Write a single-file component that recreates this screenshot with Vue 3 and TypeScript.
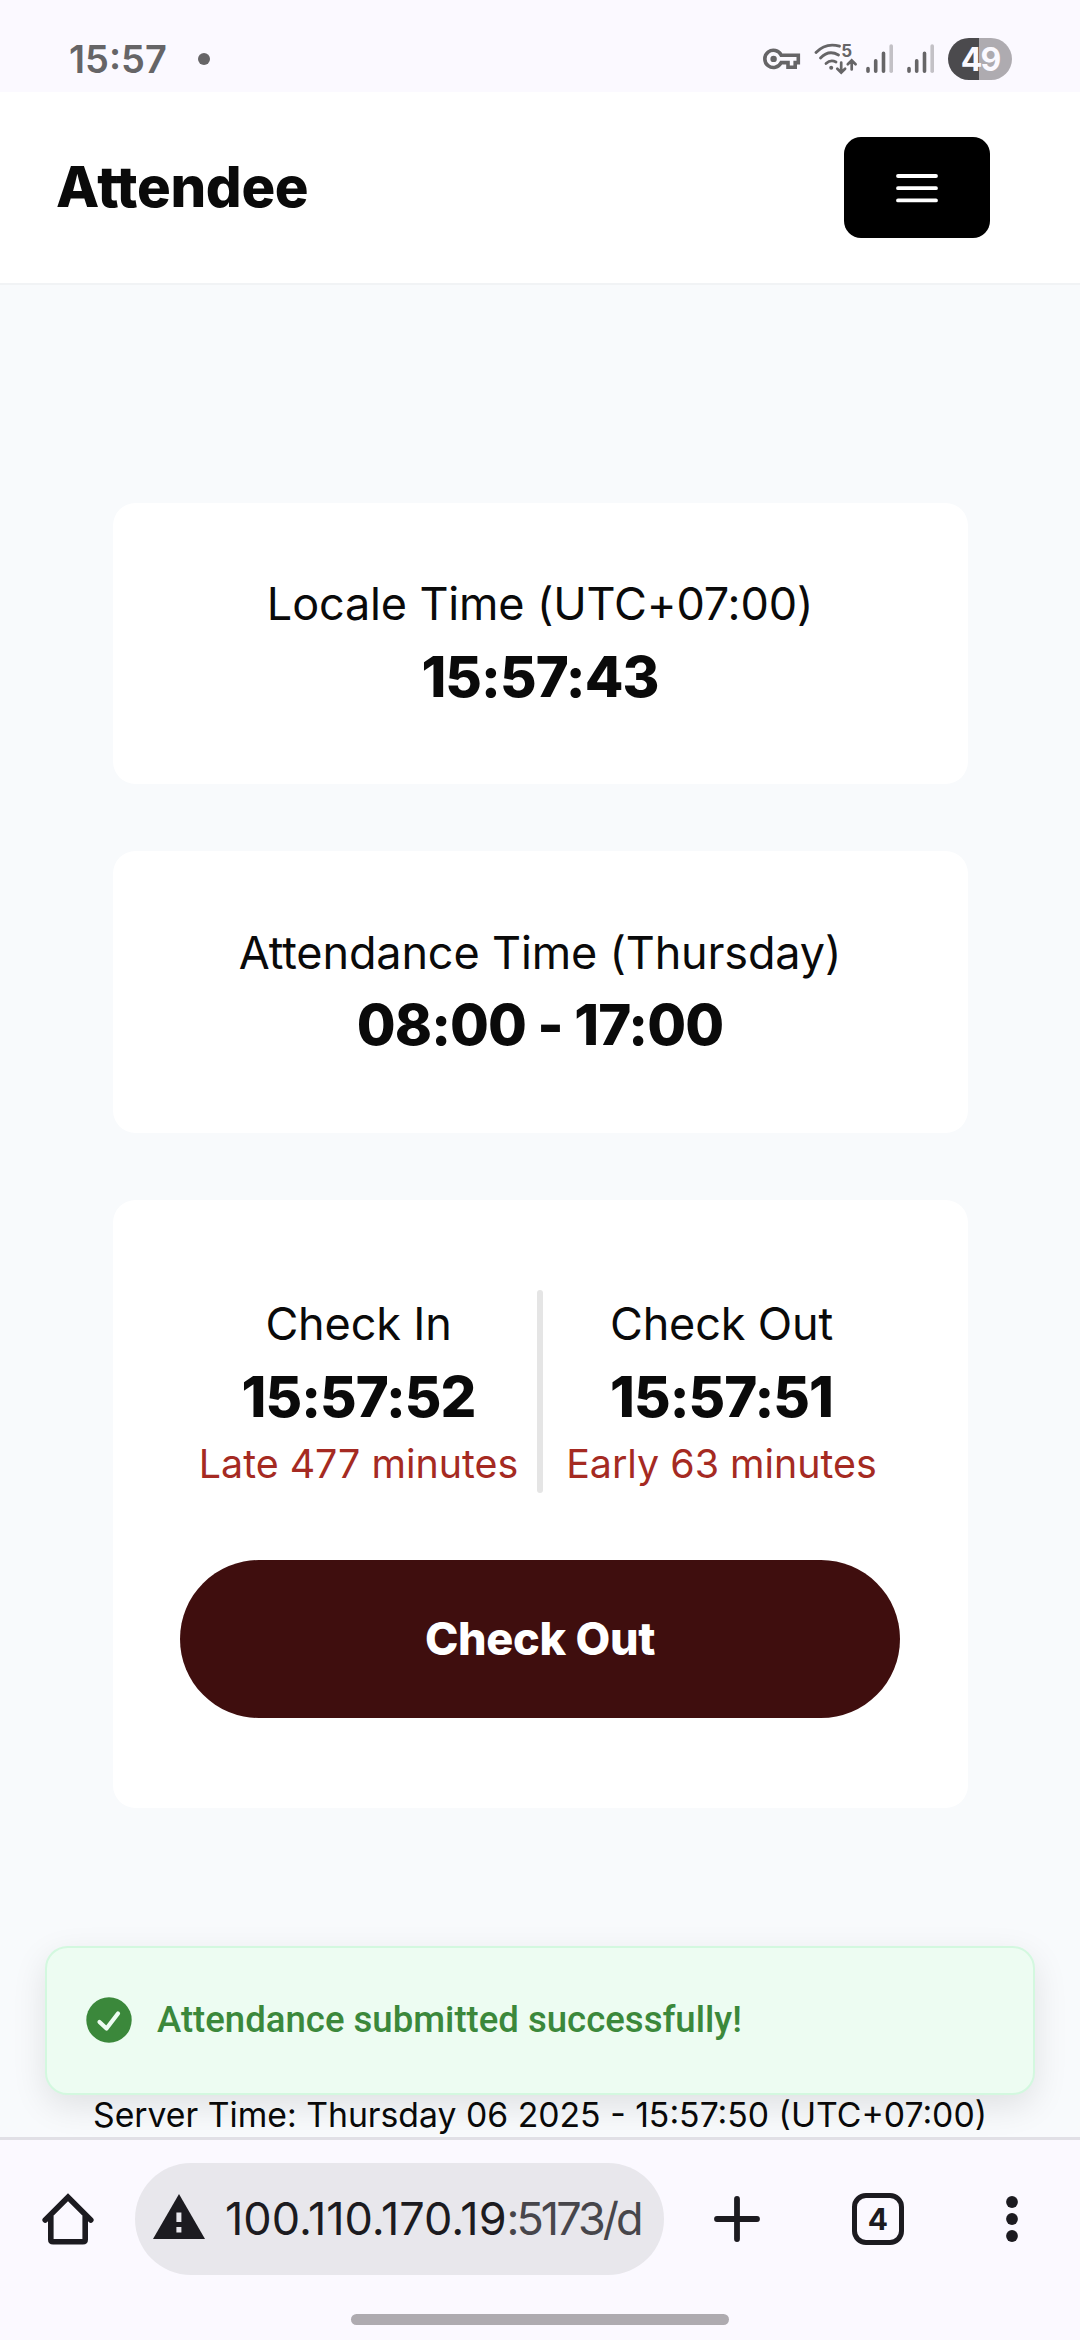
<script setup lang="ts">
interface TimeCard {
  label: string
  value: string
}

interface Attendance {
  label: string
  time: string
  note: string
}

const cards: TimeCard[] = [
  { label: 'Locale Time (UTC+07:00)', value: '15:57:43' },
  { label: 'Attendance Time (Thursday)', value: '08:00 - 17:00' },
]

const checkIn: Attendance = { label: 'Check In', time: '15:57:52', note: 'Late 477 minutes' }
const checkOut: Attendance = { label: 'Check Out', time: '15:57:51', note: 'Early 63 minutes' }
</script>

<template>
  <div class="screen">
    <div class="status">
      <span class="clock">15:57</span>
      <span class="dot"></span>
      <div class="indicators">
        <svg class="key" width="38" height="22" viewBox="0 0 38 22" fill="none" stroke="#666567">
          <path d="M18.2 7.2H35.3V14.6H32.2V19.2H25V14.6H18.2A8.6 8.6 0 1 1 18.2 7.2Z" stroke-width="3.600" />
          <circle cx="10.6" cy="10.9" r="3.2" fill="#666567" stroke="none" />
        </svg>
        <svg class="wifi" width="44" height="32" viewBox="0 0 44 32" fill="none" stroke="#666567" stroke-width="2.800" stroke-linecap="round">
          <path d="M2 9.500C9 2.200 18 1 25.500 3.200" />
          <path d="M6.500 15C12 9.200 18.500 8.600 24.500 12" />
          <path d="M12 20.500C15.500 17.200 18.500 17.200 22 19" />
          <circle cx="17.200" cy="24.700" r="2" fill="#666567" stroke="none" />
          <path d="M27.200 19.500V29M23.300 25.700L27.200 29.500L31.100 25.700M37.700 26.500V18M33.800 21.200L37.700 17.300L41.600 21.200" stroke-width="2.700" />
          <text x="27.300" y="14.300" class="wifi-gen">5</text>
        </svg>
        <svg v-for="n in 2" :key="n" class="signal" width="28" height="30" viewBox="0 0 28 30" stroke="#666567" stroke-width="3.600" stroke-linecap="round">
          <path d="M2 24.500V27.200M9.700 16.800V27.200M17.500 9.300V27.200" />
          <path d="M25.200 2V27.200" stroke="#c3c1c6" />
        </svg>
        <div class="battery"><span>49</span></div>
      </div>
    </div>

    <header class="navbar">
      <h1 class="brand">Attendee</h1>
      <button class="menu" type="button" aria-label="Menu">
        <svg width="50" height="50" viewBox="0 0 50 50" stroke="#fff" stroke-width="3.800" stroke-linecap="round">
          <path d="M6 13H44M6 25.200H44M6 37.400H44" />
        </svg>
      </button>
    </header>

    <main class="page">
      <section v-for="card in cards" :key="card.label" class="card">
        <p class="label">{{ card.label }}</p>
        <p class="value">{{ card.value }}</p>
      </section>
      <section class="card attendance">
        <div class="times">
          <div class="column">
            <p class="label">{{ checkIn.label }}</p>
            <p class="value">{{ checkIn.time }}</p>
            <p class="note">{{ checkIn.note }}</p>
          </div>
          <div class="divider"></div>
          <div class="column">
            <p class="label">{{ checkOut.label }}</p>
            <p class="value">{{ checkOut.time }}</p>
            <p class="note">{{ checkOut.note }}</p>
          </div>
        </div>
        <button class="submit" type="button">Check Out</button>
      </section>
      <p class="server">Server Time: Thursday 06 2025 - 15:57:50 (UTC+07:00)</p>

      <div class="toast">
        <svg width="46" height="46" viewBox="0 0 46 46">
          <circle cx="23" cy="23" r="22.700" fill="#3b883b" />
          <path d="M13.500 25L20.500 31.500L32 16.500" fill="none" stroke="#edfcf2" stroke-width="4.200" stroke-linecap="round" stroke-linejoin="round" />
        </svg>
        <span>Attendance submitted successfully!</span>
      </div>
    </main>

    <footer class="browser">
      <div class="toolbar">
        <svg class="home" width="52" height="52" viewBox="0 0 52 52" fill="none" stroke="#1c1b20" stroke-width="5.600" stroke-linecap="round">
          <path d="M3.200 27L26 4.200L48.800 27" stroke-linejoin="miter" />
          <path d="M8.800 23V46.500Q8.800 48.800 11.100 48.800H40.900Q43.200 48.800 43.200 46.500V23" stroke-linecap="butt" />
        </svg>
        <div class="address">
          <svg width="52" height="46" viewBox="0 0 52 46">
            <path d="M26 0L52 45H0Z" fill="#1c1b20" />
            <path d="M23.400 18.500H28.400V28H23.400ZM23.400 33H28.400V38.500H23.400Z" fill="#e8e7ec" />
          </svg>
          <span class="url"><span class="host">100.110.170.19</span><span class="path">:5173/d</span></span>
        </div>
        <svg class="plus" width="46" height="46" viewBox="0 0 46 46" stroke="#1c1b20" stroke-width="5.800" stroke-linecap="round">
          <path d="M3 23H43M23 3V43" />
        </svg>
        <div class="tabs">4</div>
        <svg class="more" width="12" height="46" viewBox="0 0 12 46" fill="#1c1b20">
          <circle cx="6" cy="6" r="5.900" />
          <circle cx="6" cy="23" r="5.900" />
          <circle cx="6" cy="40" r="5.900" />
        </svg>
      </div>
      <div class="gesture"></div>
    </footer>
  </div>
</template>

<style>
body {
  margin: 0;
}
</style>

<style scoped>
* {
  box-sizing: border-box;
}
.screen {
  display: flex;
  flex-direction: column;
  width: 1080px;
  height: 2340px;
  overflow: hidden;
  background: #f8fafc;
  color: #0a0a0a;
  font-family: Inter, sans-serif;
}
h1,
p {
  margin: 0;
}
button {
  border: 0;
  padding: 0;
  font-family: inherit;
}
svg {
  display: block;
  flex: none;
}
.status {
  display: flex;
  align-items: center;
  flex: none;
  height: 92px;
  padding: 26px 68px 0 69px;
  background: #fbf9ff;
  color: #666567;
}
.clock {
  font-size: 38px;
  font-weight: 600;
  line-height: 66px;
  width: 98px;
  white-space: nowrap;
}
.dot {
  width: 12px;
  height: 12px;
  margin-left: 31px;
  border-radius: 50%;
  background: #666567;
}
.indicators {
  display: flex;
  align-items: center;
  margin-left: auto;
}
.wifi {
  margin-left: 13px;
}
.wifi-gen {
  font: 700 17px Inter, sans-serif;
  fill: #666567;
  stroke: none;
}
.signal {
  margin-left: 8px;
}
.signal + .signal {
  margin-left: 13px;
}
.battery {
  display: flex;
  align-items: center;
  justify-content: center;
  width: 64px;
  height: 42px;
  margin-left: 13px;
  border-radius: 21px;
  background: linear-gradient(90deg, #4b4a4d 31px, #aeabb0 31px);
  color: #fbf9ff;
  font-size: 32px;
  font-weight: 700;
  letter-spacing: -2px;
}
.navbar {
  display: flex;
  align-items: center;
  justify-content: space-between;
  flex: none;
  height: 193px;
  padding: 0 90px 0 56px;
  border-bottom: 2px solid #f1f3f5;
  background: #fff;
}
.brand {
  font-size: 56.25px;
  font-weight: 800;
  letter-spacing: -0.3px;
  line-height: 79px;
}
.menu {
  display: flex;
  align-items: center;
  justify-content: center;
  width: 146px;
  height: 101px;
  border-radius: 17px;
  background: #000;
}
.page {
  position: relative;
  display: flex;
  flex-direction: column;
  align-items: center;
  gap: 67.5px;
  flex: 1;
  min-height: 0;
  padding-top: 217.6px;
}
.card {
  flex: none;
  width: 855px;
  padding: 67.5px;
  border-radius: 22.5px;
  background: #fff;
  text-align: center;
}
.attendance {
  display: flex;
  flex-direction: column;
  gap: 67.5px;
  padding: 90px 67.5px;
}
.label {
  font-size: 45px;
  font-weight: 370;
  letter-spacing: -0.15px;
  line-height: 67.5px;
}
.value {
  font-size: 56.25px;
  font-weight: 800;
  letter-spacing: -0.95px;
  line-height: 78.75px;
}
.note {
  margin-top: -1px;
  color: #a52a22;
  font-size: 39.375px;
  line-height: 57.25px;
  white-space: nowrap;
}
.times {
  display: flex;
  height: 202.5px;
}
.column {
  flex: 1 1 0;
  min-width: 0;
  display: flex;
  flex-direction: column;
  align-items: center;
}
.divider {
  width: 6px;
  border-radius: 3px;
  background: #e5e5e5;
}
.submit {
  height: 157.5px;
  border-radius: 79px;
  background: #3f0e0e;
  color: #fff;
  font-size: 45px;
  font-weight: 800;
  letter-spacing: -0.3px;
}
.server {
  margin-top: auto;
  font-size: 33.75px;
  line-height: 45px;
  white-space: nowrap;
}
.toast {
  position: absolute;
  left: 45px;
  right: 45px;
  bottom: 42px;
  display: flex;
  align-items: center;
  gap: 25px;
  height: 149px;
  padding: 0 39px 2px;
  border: 2px solid #d3f8df;
  border-radius: 22.5px;
  background: #edfcf2;
  box-shadow: 0 11px 34px rgba(0, 0, 0, 0.1);
  color: #3b883b;
  font: 500 36.56px Roboto, sans-serif;
  white-space: nowrap;
}
.browser {
  display: flex;
  flex-direction: column;
  align-items: center;
  flex: none;
  height: 203px;
  position: relative;
  border-top: 3px solid #e1e0e6;
  background: #fbf9ff;
}
.toolbar {
  display: flex;
  align-items: center;
  width: 1080px;
  height: 112px;
  margin-top: 23px;
  padding-left: 42px;
}
.address {
  display: flex;
  align-items: center;
  width: 529px;
  height: 112px;
  margin-left: 41px;
  padding: 0 23px 4px 18px;
  border-radius: 56px;
  background: #e8e7ec;
}
.url {
  flex: 1;
  min-width: 0;
  margin: 3px 0 0 20px;
  color: #47464b;
  font-size: 45px;
  font-weight: 370;
  white-space: nowrap;
}
.host {
  color: #1c1b20;
}
.path {
  letter-spacing: -3px;
}
.plus {
  margin-left: 50px;
}
.tabs {
  display: flex;
  align-items: center;
  justify-content: center;
  width: 52px;
  height: 52px;
  margin-left: 92px;
  border: 5.6px solid #1c1b20;
  border-radius: 14px;
  color: #1c1b20;
  font-size: 30px;
  font-weight: 700;
}
.more {
  margin-left: 102px;
}
.gesture {
  width: 378px;
  height: 11px;
  margin-top: 39px;
  border-radius: 6px;
  background: #aeabb0;
}
</style>
